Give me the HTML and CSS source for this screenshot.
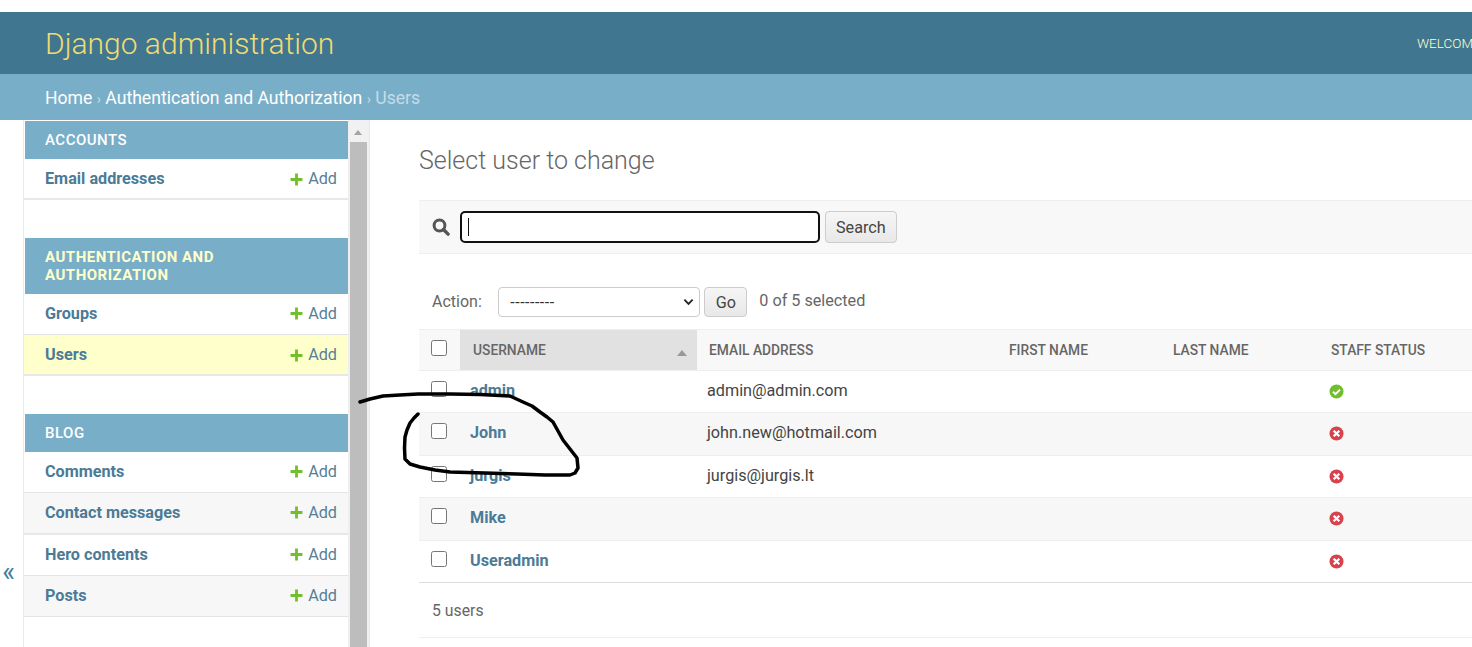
FILE: index.html
```html
<!DOCTYPE html>
<html lang="en">
<head>
    <meta charset="UTF-8">
    <meta name="viewport" content="width=device-width, initial-scale=1.0">
    <title>Select user to change | Django site admin</title>
    <link rel="stylesheet" href="styles.css">
</head>
<body>
    <header class="site-header">
        <h1 class="branding">Django administration</h1>
        <div class="user-tools">WELCOME, ADMIN. VIEW SITE / CHANGE PASSWORD / LOG OUT</div>
    </header>
    <nav class="breadcrumbs">
        <a href="#">Home</a> <span class="sep">›</span> <a href="#">Authentication and Authorization</a> <span class="sep">›</span> <span class="current">Users</span>
    </nav>
    <div class="main">
        <button class="nav-toggle" type="button">«</button>
        <aside class="sidebar">
            <section class="app">
                <h2 class="app-caption">Accounts</h2>
                <div class="app-row"><a class="model" href="#">Email addresses</a><a class="add" href="#"><svg class="plus" viewBox="0 0 12 12"><path d="M4.7 0.5h2.6v4.2h4.2v2.6H7.3v4.2H4.7V7.3H0.5V4.7h4.2z"/></svg>Add</a></div>
            </section>
            <section class="app">
                <h2 class="app-caption active">Authentication and Authorization</h2>
                <div class="app-row"><a class="model" href="#">Groups</a><a class="add" href="#"><svg class="plus" viewBox="0 0 12 12"><path d="M4.7 0.5h2.6v4.2h4.2v2.6H7.3v4.2H4.7V7.3H0.5V4.7h4.2z"/></svg>Add</a></div>
                <div class="app-row current-model"><a class="model" href="#">Users</a><a class="add" href="#"><svg class="plus" viewBox="0 0 12 12"><path d="M4.7 0.5h2.6v4.2h4.2v2.6H7.3v4.2H4.7V7.3H0.5V4.7h4.2z"/></svg>Add</a></div>
            </section>
            <section class="app">
                <h2 class="app-caption">Blog</h2>
                <div class="app-row"><a class="model" href="#">Comments</a><a class="add" href="#"><svg class="plus" viewBox="0 0 12 12"><path d="M4.7 0.5h2.6v4.2h4.2v2.6H7.3v4.2H4.7V7.3H0.5V4.7h4.2z"/></svg>Add</a></div>
                <div class="app-row alt tall"><a class="model" href="#">Contact messages</a><a class="add" href="#"><svg class="plus" viewBox="0 0 12 12"><path d="M4.7 0.5h2.6v4.2h4.2v2.6H7.3v4.2H4.7V7.3H0.5V4.7h4.2z"/></svg>Add</a></div>
                <div class="app-row"><a class="model" href="#">Hero contents</a><a class="add" href="#"><svg class="plus" viewBox="0 0 12 12"><path d="M4.7 0.5h2.6v4.2h4.2v2.6H7.3v4.2H4.7V7.3H0.5V4.7h4.2z"/></svg>Add</a></div>
                <div class="app-row alt"><a class="model" href="#">Posts</a><a class="add" href="#"><svg class="plus" viewBox="0 0 12 12"><path d="M4.7 0.5h2.6v4.2h4.2v2.6H7.3v4.2H4.7V7.3H0.5V4.7h4.2z"/></svg>Add</a></div>
            </section>
        </aside>
        <div class="scrollbar">
            <span class="scroll-arrow"></span>
            <span class="scroll-thumb"></span>
        </div>
        <main class="content">
            <h2 class="page-title">Select user to change</h2>
            <form class="toolbar">
                <svg class="search-icon" viewBox="0 0 18 18"><circle cx="7.5" cy="7.5" r="5.4" fill="none" stroke="#555" stroke-width="3"/><path d="M11.5 11.5l4.6 4.6" stroke="#555" stroke-width="3.4" stroke-linecap="round"/></svg>
                <div class="search-input"><span class="caret"></span></div>
                <button class="btn" type="button">Search</button>
            </form>
            <div class="actions">
                <label class="action-label">Action:</label>
                <div class="action-select">
                    <span>---------</span>
                    <svg class="chevron" viewBox="0 0 12 8"><path d="M1.5 1.5L6 6l4.5-4.5" fill="none" stroke="#222" stroke-width="2"/></svg>
                </div>
                <button class="btn go" type="button">Go</button>
                <span class="counter">0 of 5 selected</span>
            </div>
            <table class="results">
                <colgroup>
                    <col class="col-check"><col class="col-user"><col class="col-email"><col class="col-first"><col class="col-last"><col class="col-staff">
                </colgroup>
                <thead>
                    <tr>
                        <th class="check-cell"><span class="checkbox"></span></th>
                        <th class="sorted">Username<span class="sort-arrow"></span></th>
                        <th>Email address</th>
                        <th>First name</th>
                        <th>Last name</th>
                        <th>Staff status</th>
                    </tr>
                </thead>
                <tbody>
                    <tr>
                        <td class="check-cell"><span class="checkbox"></span></td>
                        <td><a href="#">admin</a></td>
                        <td>admin@admin.com</td><td></td><td></td>
                        <td><svg class="status" viewBox="0 0 16 16"><circle cx="8" cy="8" r="7.5" fill="#70bf2b"/><path d="M4.3 8.2l2.6 2.6 4.8-4.8" fill="none" stroke="#fff" stroke-width="2.2"/></svg></td>
                    </tr>
                    <tr class="alt">
                        <td class="check-cell"><span class="checkbox"></span></td>
                        <td><a href="#">John</a></td>
                        <td>john.new@hotmail.com</td><td></td><td></td>
                        <td><svg class="status" viewBox="0 0 16 16"><circle cx="8" cy="8" r="7.5" fill="#d9424c"/><path d="M5 5l6 6M11 5l-6 6" stroke="#fff" stroke-width="2.4"/></svg></td>
                    </tr>
                    <tr>
                        <td class="check-cell"><span class="checkbox"></span></td>
                        <td><a href="#">jurgis</a></td>
                        <td>jurgis@jurgis.lt</td><td></td><td></td>
                        <td><svg class="status" viewBox="0 0 16 16"><circle cx="8" cy="8" r="7.5" fill="#d9424c"/><path d="M5 5l6 6M11 5l-6 6" stroke="#fff" stroke-width="2.4"/></svg></td>
                    </tr>
                    <tr class="alt">
                        <td class="check-cell"><span class="checkbox"></span></td>
                        <td><a href="#">Mike</a></td>
                        <td></td><td></td><td></td>
                        <td><svg class="status" viewBox="0 0 16 16"><circle cx="8" cy="8" r="7.5" fill="#d9424c"/><path d="M5 5l6 6M11 5l-6 6" stroke="#fff" stroke-width="2.4"/></svg></td>
                    </tr>
                    <tr>
                        <td class="check-cell"><span class="checkbox"></span></td>
                        <td><a href="#">Useradmin</a></td>
                        <td></td><td></td><td></td>
                        <td><svg class="status" viewBox="0 0 16 16"><circle cx="8" cy="8" r="7.5" fill="#d9424c"/><path d="M5 5l6 6M11 5l-6 6" stroke="#fff" stroke-width="2.4"/></svg></td>
                    </tr>
                </tbody>
            </table>
            <p class="paginator">5 users</p>
        </main>
    </div>
    <!-- marker scribble drawn over the screenshot -->
    <svg class="scribble" viewBox="0 0 1472 647">
        <path d="M360 402L370 399L383 396L400 395L418 394L450 394L480 394.500L510 396L523 402L532 406L540 412L547 417L553 422L558 431L563 440L570 449L577 458L578 468L575 473L570 475L545 475L517 474L485 473L450 472L435 470L420 467L410 464L405 459L404.500 448L405 437L407 430L410 423L414 418L418 414" fill="none" stroke="#000" stroke-width="3.500" stroke-linecap="round" stroke-linejoin="round"/>
    </svg>
</body>
</html>
```
FILE: styles.css
```css
html, body {
    margin: 0;
    padding: 0;
    height: 647px;
    overflow: hidden;
}
body {
    font-family: Roboto, "Liberation Sans", sans-serif;
    font-size: 16.2px;
    color: #444;
    background-color: #fff;
    padding-top: 12px;
    box-sizing: border-box;
    position: relative;
}
a {
    text-decoration: none;
}
.site-header {
    height: 62px;
    background-color: #417690;
    padding-left: 45px;
    display: flex;
    align-items: center;
    justify-content: space-between;
    white-space: nowrap;
    overflow: hidden;
}
.branding {
    margin: 0;
    font-size: 30px;
    font-weight: 300;
    color: #f0dc70;
}
.user-tools {
    font-size: 13.5px;
    font-weight: 300;
    color: #ffc;
    flex: none;
    width: 55px;
}
.breadcrumbs {
    height: 46px;
    box-sizing: border-box;
    background-color: #79aec8;
    padding-left: 45px;
    line-height: 48px;
    font-size: 17.6px;
    color: #c4dce8;
}
.breadcrumbs a {
    color: #fff;
}
.breadcrumbs .sep {
    font-size: 14px;
}
.main {
    display: flex;
    height: 527px;
    overflow: hidden;
}
.nav-toggle {
    width: 24px;
    flex: none;
    border: none;
    background: #fff;
    color: #447e9b;
    font-family: inherit;
    font-size: 27px;
    padding: 0 6px 0 0;
    height: 100%;
    padding-top: 378px;
    box-sizing: border-box;
    border-right: 1px solid #eaeaea;
    line-height: 1;
}
.sidebar {
    width: 325px;
    flex: none;
    padding-top: 1px;
    box-sizing: border-box;
    border-right: 1px solid #eee;
}
.app {
    margin-bottom: 38px;
}
.app-caption {
    margin: 0 0 0 1px;
    padding: 0 20px;
    min-height: 38px;
    display: flex;
    align-items: center;
    background-color: #79aec8;
    color: #fff;
    font-size: 15px;
    font-weight: 500;
    letter-spacing: 0.5px;
    line-height: 18px;
    text-transform: uppercase;
    box-sizing: border-box;
}
.app-caption.active {
    height: 56px;
    color: #ffc;
    font-weight: 700;
}
.app-row {
    height: 41px;
    box-sizing: border-box;
    display: flex;
    align-items: center;
    justify-content: space-between;
    padding: 0 11px 2px 21px;
    border-bottom: 1px solid #e4e4e4;
}
.app:not(:last-child) .app-row:last-child {
    border-bottom: 2px solid #e8e8e8;
    padding-bottom: 0;
}
.app-row.tall {
    height: 42px;
    border-bottom: 2px solid #e8e8e8;
}
.app-row.alt {
    background-color: #f7f7f7;
}
.app-row.current-model {
    background-color: #ffc;
}
.model {
    color: #4b7b96;
    font-weight: 700;
}
.add {
    color: #557f97;
    display: flex;
    align-items: center;
}
.plus {
    width: 13px;
    height: 13px;
    fill: #70bf2b;
    margin-right: 5px;
    margin-top: 1px;
}
.scrollbar {
    width: 21px;
    flex: none;
    background-color: #f1f1f1;
    border-right: 1px solid #e8e8e8;
    box-sizing: border-box;
    padding-left: 1px;
    display: flex;
    flex-direction: column;
}
.scroll-arrow {
    margin: 10px 0 0 4px;
    width: 0;
    height: 0;
    border-left: 4.5px solid transparent;
    border-right: 4.5px solid transparent;
    border-bottom: 5px solid #a3a3a3;
}
.scroll-thumb {
    margin-top: 7px;
    width: 17px;
    flex: 1;
    background-color: #bdbdbd;
}
.content {
    flex: none;
    width: 1053px;
    margin-left: 49px;
    overflow: hidden;
}
.page-title {
    margin: 26px 0 0;
    font-size: 25px;
    font-weight: 300;
    color: #666;
    line-height: 30px;
    height: 54px;
}
.toolbar {
    height: 54px;
    box-sizing: border-box;
    background-color: #f8f8f8;
    border-top: 1px solid #eee;
    border-bottom: 1px solid #eee;
    display: flex;
    align-items: center;
    padding-left: 13px;
}
.search-icon {
    width: 18px;
    height: 18px;
    margin-right: 10px;
}
.search-input {
    width: 360px;
    height: 32px;
    box-sizing: border-box;
    background-color: #fff;
    border: 2px solid #111;
    border-radius: 5px;
    padding: 5px 6px;
}
.caret {
    display: block;
    width: 1px;
    height: 18px;
    background-color: #111;
}
.btn {
    height: 32px;
    margin-left: 5px;
    padding: 0 10px;
    border: 1px solid #ccc;
    border-radius: 4px;
    background: linear-gradient(#f6f6f6, #e8e8e8);
    color: #444;
    font-family: inherit;
    font-size: 16.2px;
}
.actions {
    height: 75px;
    display: flex;
    align-items: center;
    padding: 21px 0 0 13px;
    box-sizing: border-box;
    font-size: 16px;
    color: #666;
}
.action-label {
    margin-right: 16.5px;
    margin-top: -2px;
}
.action-select {
    width: 202px;
    height: 30px;
    box-sizing: border-box;
    border: 1px solid #ccc;
    border-radius: 4px;
    background-color: #fff;
    display: flex;
    align-items: center;
    justify-content: space-between;
    padding: 0 5px 0 11px;
    font-size: 16px;
    letter-spacing: 0.5px;
    color: #333;
}
.chevron {
    width: 11px;
    height: 8px;
}
.btn.go {
    width: 43px;
    height: 30px;
    padding: 0;
    margin-left: 4px;
}
.counter {
    margin-left: 12px;
    margin-top: -4px;
    font-size: 16.2px;
}
.results {
    border-collapse: collapse;
    table-layout: fixed;
    width: 1053px;
}
.col-check { width: 41px; }
.col-user { width: 237px; }
.col-email { width: 300px; }
.col-first { width: 164px; }
.col-last { width: 158px; }
.results th {
    height: 41px;
    padding: 0 12px;
    box-sizing: border-box;
    background-color: #f8f8f8;
    border-top: 1px solid #eee;
    border-bottom: 1px solid #eee;
    text-align: left;
    text-transform: uppercase;
    font-size: 13.8px;
    font-weight: 500;
    color: #666;
    white-space: nowrap;
}
.results th.sorted {
    background-color: #e1e1e1;
    position: relative;
    padding-left: 13px;
}
.sort-arrow {
    position: absolute;
    right: 10px;
    top: 20px;
    width: 0;
    height: 0;
    border-left: 5px solid transparent;
    border-right: 5px solid transparent;
    border-bottom: 6px solid #999;
}
.results td {
    height: 42px;
    padding: 0 10px 2px;
    box-sizing: border-box;
    border-bottom: 1px solid #eee;
    color: #444;
}
.results tr.alt td {
    height: 43px;
    padding-bottom: 3px;
    background-color: #f7f7f7;
}
.results tr:last-child td {
    border-bottom-color: #ddd;
}
.results td a {
    color: #4b7b96;
    font-weight: 700;
}
.results .check-cell,
.results tr.alt .check-cell {
    padding-left: 12px;
    padding-right: 0;
}
.checkbox {
    display: block;
    width: 16px;
    height: 16px;
    box-sizing: border-box;
    border: 1px solid #767676;
    border-radius: 2.5px;
    background-color: #fff;
    margin-top: -4px;
}
.status {
    display: block;
    width: 15px;
    height: 15px;
    margin: 2px 0 0;
}
.paginator {
    margin: 1px 0 0;
    height: 54px;
    box-sizing: border-box;
    padding-left: 13px;
    line-height: 54px;
    font-size: 15.8px;
    color: #666;
    border-bottom: 1px solid #eee;
}
.scribble {
    position: absolute;
    left: 0;
    top: 0;
    width: 1472px;
    height: 647px;
    pointer-events: none;
}
```
